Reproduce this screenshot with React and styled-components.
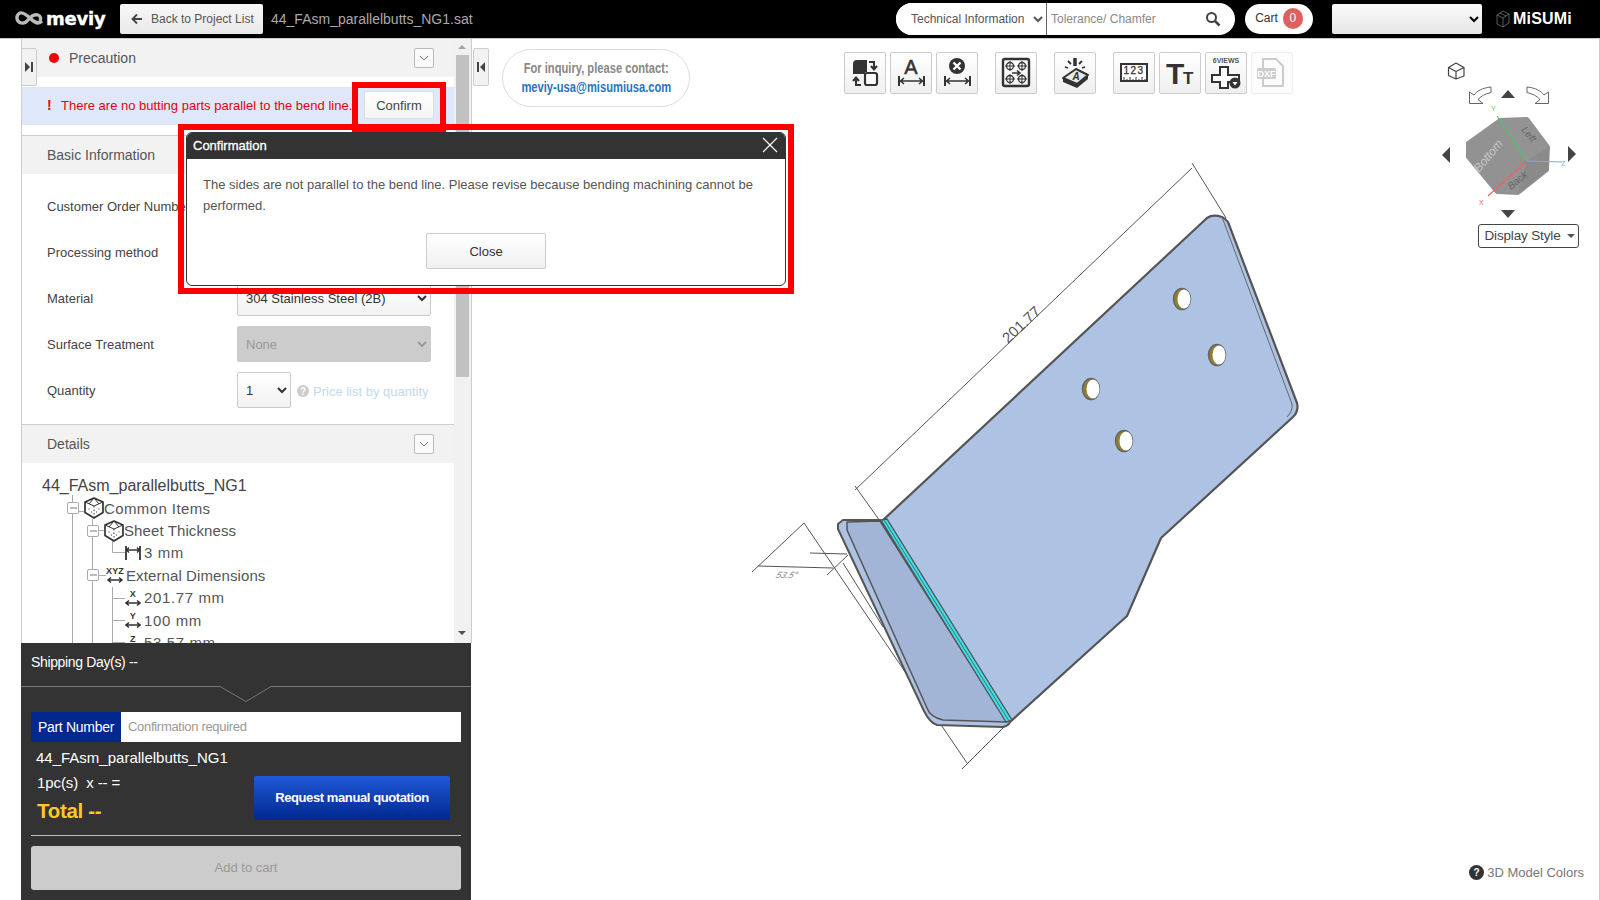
import React from 'react';
import styled, { createGlobalStyle } from 'styled-components';

const GlobalStyle = createGlobalStyle`
  html, body {
    margin: 0;
    padding: 0;
    background: #fff;
    overflow: hidden;
  }
  body {
    font-family: 'Liberation Sans', Arial, sans-serif;
    color: #555;
  }
  * { box-sizing: border-box; }
`;

const Page = styled.div`
  width: 1600px;
  height: 900px;
  display: flex;
  flex-direction: column;
  position: relative;
  overflow: hidden;
`;

/* header */
const Header = styled.header`
  height: 39px;
  flex: none;
  background: #000;
  border-bottom: 1px solid #ccc;
  display: flex;
  align-items: center;
  padding: 0 28px 1px 15px;
`;
const Logo = styled.div`
  display: flex;
  align-items: center;
  gap: 2px;
  width: 105px;
  margin-top: -1px;
`;
const LogoWord = styled.span`
  font-family: 'DejaVu Sans', sans-serif;
  font-weight: 700;
  font-size: 18px;
  color: #fff;
  letter-spacing: -0.2px;
  -webkit-text-stroke: 0.4px #fff;
`;
const BackButton = styled.button`
  width: 143px;
  height: 30px;
  border: 0;
  border-radius: 2px;
  background: linear-gradient(#f7f7f7, #e9e9e9);
  color: #555;
  font: 12px 'Liberation Sans', sans-serif;
  display: flex;
  align-items: center;
  gap: 8px;
  padding: 0 0 0 11px;
`;
const FileName = styled.span`
  margin-left: 8px;
  color: #aaa;
  font-size: 14px;
`;
const HeaderRight = styled.div`
  margin-left: auto;
  display: flex;
  align-items: center;
`;
const SearchPill = styled.div`
  width: 339px;
  height: 32px;
  border-radius: 16px;
  background: #fff;
  display: flex;
  align-items: center;
  overflow: hidden;
  padding-right: 14px;
`;
const SearchSelect = styled.select`
  width: 151px;
  height: 32px;
  border: 0;
  border-right: 1px solid #666;
  background: #fff;
  color: #555;
  font: 12px 'Liberation Sans', sans-serif;
  padding-left: 11px;
  outline: none;
`;
const SearchHint = styled.span`
  flex: 1;
  padding-left: 4px;
  font-size: 12px;
  color: #888;
`;
const CartPill = styled.div`
  width: 68px;
  height: 30px;
  margin-left: 10px;
  padding-bottom: 1px;
  border-radius: 15px;
  background: #fff;
  display: flex;
  align-items: center;
  justify-content: center;
  gap: 5px;
  font-size: 12px;
  color: #333;
`;
const CartCount = styled.span`
  width: 20px;
  height: 21px;
  border-radius: 10px;
  background: #e06060;
  color: #fff;
  display: flex;
  align-items: center;
  justify-content: center;
  font-size: 12px;
`;
const LangSelect = styled.select`
  width: 150px;
  height: 30px;
  margin-left: 19px;
  border: 0;
  border-radius: 2px;
  background: linear-gradient(#fafafa, #e6e6e6);
`;
const Misumi = styled.div`
  margin-left: 14px;
  display: flex;
  align-items: center;
  gap: 3px;
  color: #fff;
  font-weight: 700;
  font-size: 16px;
  letter-spacing: 0.2px;
`;

/* left side */
const Body = styled.div`
  flex: 1;
  min-height: 0;
  display: flex;
  padding-left: 21px;
`;
const Sidebar = styled.aside`
  width: 450px;
  flex: none;
  display: flex;
  flex-direction: column;
  position: relative;
`;
const ScrollArea = styled.div`
  flex: 1;
  min-height: 0;
  margin-right: -1px;
  display: flex;
  border-left: 1px solid #ccc;
  border-right: 1px solid #ccc;
  overflow: hidden;
`;
const ScrollContent = styled.div`
  width: 432px;
  flex: none;
  position: relative;
`;
const Scrollbar = styled.div`
  width: 17px;
  flex: none;
  background: #f1f1f1;
  display: flex;
  flex-direction: column;
  align-items: center;
`;
const ScrollThumb = styled.div`
  width: 13px;
  height: 322px;
  margin-top: 16px;
  background: #c1c1c1;
`;
const ScrollArrow = styled.span`
  width: 0;
  height: 0;
  position: absolute;
  right: -12px;
  border-left: 4px solid transparent;
  border-right: 4px solid transparent;
  ${(p) => (p.$down
    ? 'border-top: 4px solid #505050; top: 592px;'
    : 'border-bottom: 4px solid #a3a3a3; top: 6px;')}
`;
const SideTab = styled.div`
  position: absolute;
  top: 9px;
  ${(p) => (p.$right ? 'left: 452px;' : 'left: 0;')}
  width: 16px;
  height: 38px;
  background: #f2f2f2;
  border: 1px solid #ccc;
  border-radius: 2px;
  display: flex;
  align-items: center;
  justify-content: center;
  z-index: 2;
`;
const SectionHead = styled.div`
  height: 38px;
  background: #f2f2f2;
  display: flex;
  align-items: center;
  justify-content: space-between;
  padding: 0 20px 0 ${(p) => p.$pad || 25}px;
  font-size: 14px;
  color: #555;
`;
const HeadLabel = styled.span`
  display: flex;
  align-items: center;
  gap: 10px;
`;
const RedDot = styled.span`
  width: 10px;
  height: 10px;
  border-radius: 50%;
  background: #ee0000;
`;
const ChevronBox = styled.span`
  width: 20px;
  height: 20px;
  border: 1px solid #bbb;
  border-radius: 2px;
  background: #fafafa;
  display: flex;
  align-items: center;
  justify-content: center;
`;
const WarnRow = styled.div`
  height: 38px;
  margin-top: 10px;
  background: #dfe8fb;
  display: flex;
  align-items: center;
  padding: 0 20px 2px 25px;
  color: #e60012;
  font-size: 13px;
`;
const WarnMark = styled.b`
  width: 14px;
  font-size: 14px;
`;
const ConfirmButton = styled.button`
  margin-left: auto;
  width: 70px;
  height: 28px;
  border: 1px solid #ddd;
  border-radius: 2px;
  background: linear-gradient(#fff, #f4f4f4);
  color: #444;
  font: 13px 'Liberation Sans', sans-serif;
`;
const Divider = styled.div`
  margin-top: ${(p) => p.$gap ?? 10}px;
  height: 1px;
  background: #ccc;
`;
const Form = styled.div`
  padding: 9px 0 11px 25px;
`;
const FormRow = styled.div`
  height: 46px;
  display: flex;
  align-items: center;
  font-size: 13px;
  color: #444;
`;
const FormLabel = styled.span`
  width: 190px;
  flex: none;
`;
const Field = styled.select`
  width: ${(p) => p.$width || 194}px;
  height: 36px;
  border: 1px solid #ccc;
  border-radius: 2px;
  background: ${(p) => (p.disabled ? '#ccc' : 'linear-gradient(#fff, #f2f2f2)')};
  color: ${(p) => (p.disabled ? '#999' : '#333')};
  opacity: 1;
  font: 13px 'Liberation Sans', sans-serif;
  padding-left: 4px;
`;
const PriceLink = styled.span`
  margin: 2px 0 0 6px;
  display: flex;
  align-items: center;
  gap: 4px;
  font-size: 13px;
  color: #c3d9f0;
`;
const HelpDot = styled.span`
  width: ${(p) => p.$size || 12}px;
  height: ${(p) => p.$size || 12}px;
  border-radius: 50%;
  background: ${(p) => p.$bg || '#ccc'};
  color: #fff;
  font-size: 10px;
  font-weight: 700;
  display: flex;
  align-items: center;
  justify-content: center;
`;

/* tree */
const Tree = styled.div`
  position: relative;
  padding-top: 12px;
`;
const TreeTitle = styled.div`
  height: 22px;
  line-height: 22px;
  padding-left: 20px;
  font-size: 16px;
  color: #444;
`;
const TreeRow = styled.div`
  height: 22.4px;
  display: flex;
  align-items: center;
  padding-left: ${(p) => p.$indent}px;
  font-size: 15px;
  letter-spacing: ${(p) => p.$track}px;
  color: #555;
  position: relative;
  white-space: nowrap;
`;
const Expander = styled.span`
  width: 12px;
  height: 12px;
  margin-right: ${(p) => p.$after || 5}px;
  border: 1px solid #aaa;
  border-radius: 2px;
  background: #fff;
  display: flex;
  align-items: center;
  justify-content: center;
  &::before {
    content: '';
    width: 7px;
    height: 2px;
    background: #bbb;
  }
`;
const Guides = styled.svg`
  position: absolute;
  left: 0;
  top: 0;
`;

/* bottom panel */
const Quote = styled.section`
  height: 257px;
  flex: none;
  background: #333;
  color: #fff;
  position: relative;
  padding: 0 10px;
`;
const Shipping = styled.div`
  height: 43px;
  padding-top: 11px;
  font-size: 14px;
  letter-spacing: -0.35px;
`;
const Notch = styled.svg`
  display: block;
  margin-left: -10px;
`;
const PartRow = styled.div`
  margin-top: 8px;
  height: 30px;
  display: flex;
  background: #fff;
`;
const PartTag = styled.div`
  width: 90px;
  background: #00288f;
  color: #fff;
  font-size: 14px;
  letter-spacing: -0.3px;
  display: flex;
  align-items: center;
  justify-content: center;
`;
const PartHint = styled.div`
  padding: 0 0 2px 7px;
  color: #999;
  font-size: 13px;
  letter-spacing: -0.3px;
  display: flex;
  align-items: center;
`;
const PartName = styled.div`
  margin: 6px 0 0 5px;
  font-size: 15px;
  line-height: 20px;
`;
const PriceRow = styled.div`
  display: flex;
  justify-content: space-between;
  padding: 0 11px 0 6px;
  height: 51px;
`;
const PriceCol = styled.div`
  padding-top: 4px;
`;
const Qty = styled.div`
  font-size: 15px;
  line-height: 22px;
  letter-spacing: -0.1px;
  white-space: pre;
`;
const Total = styled.div`
  margin-top: 4px;
  color: #ffc91f;
  font-size: 20.5px;
  font-weight: 700;
  letter-spacing: -0.3px;
  line-height: 26px;
`;
const QuoteButton = styled.button`
  width: 196px;
  height: 44px;
  margin-top: 8px;
  padding-bottom: 2px;
  border: 0;
  border-radius: 2px;
  background: linear-gradient(#1f58d6, #00288f);
  color: #fff;
  font: 700 13px 'Liberation Sans', sans-serif;
  letter-spacing: -0.4px;
`;
const QuoteLine = styled.div`
  height: 1px;
  background: #bbb;
  margin-top: 16px;
`;
const CartButton = styled.button`
  display: block;
  width: 100%;
  height: 44px;
  margin-top: 10px;
  padding-bottom: 2px;
  border: 0;
  border-radius: 3px;
  background: #ccc;
  color: #999;
  font: 13px 'Liberation Sans', sans-serif;
`;

/* viewer */
const Viewer = styled.main`
  flex: 1;
  position: relative;
  border-right: 1px solid #ccc;
`;
const Drawing = styled.svg`
  position: absolute;
  left: 0;
  top: 0;
`;
const ViewerTop = styled.div`
  position: relative;
  display: flex;
  align-items: flex-start;
  padding: 10px 0 0 31px;
`;
const Inquiry = styled.div`
  width: 188px;
  height: 58px;
  border: 1px solid #ddd;
  border-radius: 29px;
  display: flex;
  flex-direction: column;
  align-items: center;
  justify-content: center;
  font-weight: 700;
  font-size: 14.5px;
  line-height: 19px;
  white-space: nowrap;
`;
const InquiryLine = styled.span`
  display: block;
  transform: scaleX(0.77);
  color: ${(p) => p.$color};
`;
const Toolbar = styled.div`
  margin: 3px 0 0 154px;
  display: flex;
`;
const ToolGroup = styled.div`
  display: flex;
  gap: 4px;
  margin-right: 17px;
`;
const ToolButton = styled.div`
  width: 42px;
  height: 42px;
  border: 1px solid ${(p) => (p.$off ? '#eee' : '#ccc')};
  border-radius: 2px;
  background: ${(p) => (p.$off ? '#fcfcfc' : 'linear-gradient(#fff, #efefef)')};
  display: flex;
`;
const DisplayStyle = styled.div`
  position: absolute;
  left: 1007px;
  top: 185px;
  width: 101px;
  height: 24px;
  padding: 0 0 1px 2px;
  border: 1px solid #444;
  border-radius: 3px;
  background: #fff;
  display: flex;
  align-items: center;
  justify-content: center;
  gap: 6px;
  font-size: 13.5px;
  letter-spacing: -0.15px;
  color: #444;
`;
const Caret = styled.span`
  border-left: 4px solid transparent;
  border-right: 4px solid transparent;
  border-top: 4px solid #555;
`;
const ColorsLink = styled.div`
  position: absolute;
  right: 15px;
  bottom: 20px;
  display: flex;
  align-items: center;
  gap: 3px;
  font-size: 13px;
  color: #777;
`;

/* overlays */
const RedFrame = styled.div`
  position: absolute;
  left: ${(p) => p.$x}px;
  top: ${(p) => p.$y}px;
  width: ${(p) => p.$w}px;
  height: ${(p) => p.$h}px;
  border: 6px solid #f00;
  z-index: ${(p) => p.$z};
`;
const Modal = styled.div`
  position: absolute;
  left: 186px;
  top: 132px;
  width: 600px;
  height: 154px;
  z-index: 6;
  background: #fff;
  border: 1px solid #333;
  border-radius: 6px;
  overflow: hidden;
`;
const ModalHead = styled.div`
  height: 26px;
  padding: 0 7px 2px 6px;
  background: #333;
  color: #fff;
  font-size: 13px;
  -webkit-text-stroke: 0.3px #fff;
  display: flex;
  align-items: center;
  justify-content: space-between;
`;
const ModalText = styled.p`
  margin: 15px 16px 0;
  font-size: 13px;
  line-height: 21px;
  color: #555;
`;
const CloseButton = styled.button`
  display: block;
  width: 120px;
  height: 36px;
  margin: 17px auto 0;
  border: 1px solid #ccc;
  border-radius: 2px;
  background: linear-gradient(#fff, #f0f0f0);
  color: #333;
  font: 13px 'Liberation Sans', sans-serif;
`;

const DARK = '#333';

function Dim({ y = 28, x1 = 8, x2 = 33 }) {
  return (
    <g stroke={DARK} strokeWidth="2" fill="none">
      <path d={`M${x1} ${y - 5}V${y + 5}M${x2} ${y - 5}V${y + 5}`} />
      <path strokeWidth="1.5" d={`M${x1 + 1} ${y}H${x2 - 1}M${x1 + 5} ${y - 3}L${x1 + 1.5} ${y}L${x1 + 5} ${y + 3}M${x2 - 5} ${y - 3}L${x2 - 1.5} ${y}L${x2 - 5} ${y + 3}`} />
    </g>
  );
}

function Tool({ children }) {
  return <svg width="40" height="40" viewBox="0 0 40 40">{children}</svg>;
}

const SwapIcon = () => (
  <Tool>
    <path d="M12 7H22V19H20V21H8V11Q8 7 12 7Z" fill={DARK} />
    <rect x="20" y="20" width="12" height="12" rx="2" fill="#fff" stroke={DARK} strokeWidth="2.2" />
    <path d="M24 9h5v7M26 13l3 3.5 3-3.5M16 32h-5v-7M8 28l3-3.500 3 3.5" fill="none" stroke={DARK} strokeWidth="2" />
  </Tool>
);
const DimAIcon = () => (
  <Tool>
    <text x="20" y="21" textAnchor="middle" fontSize="20" stroke={DARK} strokeWidth="0.5" fill={DARK} fontFamily="Liberation Sans">A</text>
    <Dim />
  </Tool>
);
const DimXIcon = () => (
  <Tool>
    <circle cx="20" cy="13" r="8" fill={DARK} />
    <path d="M16.5 9.5l7 7M23.5 9.5l-7 7" stroke="#fff" strokeWidth="2.4" />
    <Dim />
  </Tool>
);
const HolesIcon = () => (
  <Tool>
    <rect x="7" y="6" width="26" height="27" rx="2" fill="none" stroke={DARK} strokeWidth="2.4" />
    {[[14, 13], [26, 13], [14, 26], [26, 26]].map(([cx, cy]) => (
      <g key={`${cx}-${cy}`} fill="none" stroke={DARK} strokeWidth="1.3">
        <circle cx={cx} cy={cy} r="3.5" />
        <path d={`M${cx - 5} ${cy}H${cx + 5}M${cx} ${cy - 5}V${cy + 5}`} strokeWidth="1" />
      </g>
    ))}
    <path d="M16 20h7M21 17.5l3 2.5-3 2.5" fill="none" stroke={DARK} strokeWidth="1.6" />
  </Tool>
);
const StampIcon = () => (
  <Tool>
    <path d="M8 25l13-9 12 6-11 9z" fill="#e8e8e8" stroke={DARK} strokeWidth="2" strokeLinejoin="round" />
    <path d="M8 25v4l14 6 11-9v-4l-11 9z" fill={DARK} />
    <text x="21" y="27" textAnchor="middle" fontSize="10" fontStyle="italic" fontWeight="700" fill={DARK} fontFamily="Liberation Sans">A</text>
    <path d="M20 5v8" stroke={DARK} strokeWidth="3.5" />
    <path d="M13 8l3 3M27 8l-3 3M10 14l3 1M30 14l-3 1" stroke={DARK} strokeWidth="1.8" fill="none" />
  </Tool>
);
const RulerIcon = () => (
  <Tool>
    <rect x="7" y="11" width="26" height="17" fill="#fff" stroke={DARK} strokeWidth="2" />
    <text x="20" y="21" textAnchor="middle" fontSize="10" letterSpacing="1.5" stroke={DARK} strokeWidth="0.3" fill={DARK} fontFamily="Liberation Sans">123</text>
    <path d="M10 28v-4M13 28v-2M16 28v-4M19 28v-2M22 28v-4M25 28v-2M28 28v-4M31 28v-2" stroke={DARK} strokeWidth="1" />
  </Tool>
);
const FontSizeIcon = () => (
  <Tool>
    <text x="6" y="31" fontSize="30" fontWeight="700" fill={DARK} fontFamily="Liberation Sans">T</text>
    <text x="23" y="31" fontSize="17" fontWeight="700" fill={DARK} fontFamily="Liberation Sans">T</text>
  </Tool>
);
const ViewsIcon = () => (
  <Tool>
    <text x="20" y="10" textAnchor="middle" fontSize="7" fontWeight="700" fill="#555" fontFamily="Liberation Sans">6VIEWS</text>
    <path d="M14 14h8v8h11v7H22v6h-8v-6H6v-7h8z" fill="#fff" stroke={DARK} strokeWidth="2" />
    <path d="M14 22h8v7h-8z" fill="none" stroke={DARK} strokeWidth="0" />
    <circle cx="29" cy="30" r="5.5" fill={DARK} />
    <path d="M26.5 29h5L29 32.5z" fill="#fff" />
  </Tool>
);
const DxfIcon = () => (
  <Tool>
    <path d="M11 6h13l7 7v20H11z" fill="none" stroke="#ccc" strokeWidth="2" />
    <rect x="5" y="15" width="19" height="11" rx="1.5" fill="#ccc" />
    <text x="14.5" y="24" textAnchor="middle" fontSize="9" fontWeight="700" fill="#fff" fontFamily="Liberation Sans">DXF</text>
  </Tool>
);

function CubeIcon() {
  return (
    <svg width="20" height="22" viewBox="0 0 20 22">
      <path d="M10 1L19 5V15.5L10 21L1 15.5V5Z" fill="#fff" stroke="#333" strokeWidth="1.7" strokeLinejoin="round" />
      <path d="M1 5L10 9L19 5M10 1L5 7M10 1L15 7" fill="none" stroke="#333" strokeWidth="1" />
      <path d="M10 9V20" stroke="#333" strokeWidth="1" strokeDasharray="1.5 2" />
      <path d="M4.5 12h1M14.5 12h1M7 15h1M12 15h1" stroke="#333" strokeWidth="1" />
    </svg>
  );
}
function ThicknessIcon() {
  return (
    <svg width="16" height="16" viewBox="0 0 16 16" style={{ marginRight: 3 }}>
      <path d="M1 1v14M15 1v14" fill="none" stroke="#333" strokeWidth="1.8" />
      <path d="M1 5h14M4 2.5L1.5 5 4 7.5M12 2.5L14.5 5 12 7.5" fill="none" stroke="#333" strokeWidth="1.4" />
    </svg>
  );
}
function AxisIcon({ label, wide }) {
  return (
    <svg width={wide ? 18 : 16} height="18" viewBox={wide ? '0 0 18 18' : '0 0 16 18'} style={{ marginRight: wide ? 2 : 3 }}>
      <text x={wide ? 9 : 8} y="8" textAnchor="middle" fontSize={9} fontWeight="700" fill="#333" fontFamily="Liberation Sans">{label}</text>
      <path d={wide ? 'M2 14h14M5 11.5L2 14l3 2.5M13 11.5L16 14l-3 2.5' : 'M1 14h14M4 11.5L1 14l3 2.5M12 11.5L15 14l-3 2.5'} fill="none" stroke="#333" strokeWidth="1.5" />
    </svg>
  );
}

const HOLES = [[1182, 299], [1217, 355], [1091, 389], [1124, 441]];

function Part() {
  return (
    <g>
      {/* dimension lines */}
      <g stroke="#555" strokeWidth="1" fill="none">
        <path d="M855 490L1192 168M1192 163L1226 218M855 486L880 521" />
        <path d="M804 523L752 572M804 523L967 763M962 769L1008 723" />
        <path d="M758 566L833 568M810 553L847 554M827 575L848 555M843 563L883 627" />
      </g>
      <text fontSize="15" fill="#555" fontFamily="Liberation Sans" transform="translate(1008 344) rotate(-43)">201.77</text>
      <text fontSize="9" fontStyle="italic" fill="#888" fontFamily="Liberation Sans" transform="translate(775 578) skewX(-25)">53.5°</text>

      {/* flange lip */}
      <path d="M843 520L838 524V529L924 711Q930 723 937 725L1003 727Q1008 726 1010 722L880 520Z" fill="#aec3e4" stroke="#555" strokeWidth="2" strokeLinejoin="round" />
      {/* flange */}
      <path d="M847 522L880 521L1007 722L943 720Q930 717 927 708L847 530Z" fill="#a2b5d6" stroke="#555" strokeWidth="1.5" strokeLinejoin="round" />
      {/* plate */}
      <path d="M882 521L1207 218Q1213 214 1222 217Q1226 219 1228 222L1297 403Q1299 411 1293 417L1161 538L1127 616L1010 722Z" fill="#aec3e4" stroke="#555" strokeWidth="2.2" strokeLinejoin="round" />
      <path d="M1222 217L1292 404Q1293 411 1287 417" fill="none" stroke="#666" strokeWidth="1" />
      {/* bend */}
      <path d="M881 520L887 519L1012 720L1006 722Z" fill="#37e0e8" stroke="#555" strokeWidth="1.3" />
      <path d="M884 520L1009 721" stroke="#667" strokeWidth="1" />
      {HOLES.map(([cx, cy]) => (
        <g key={cx}>
          <ellipse cx={cx} cy={cy} rx="8.5" ry="10.5" fill="#8f7f2f" stroke="#666" strokeWidth="1.5" />
          <ellipse cx={cx + 2} cy={cy} rx="6.5" ry="9.5" fill="#fff" />
        </g>
      ))}
    </g>
  );
}

function ViewCube() {
  const arrow = 'M1491 87C1482 88 1477 91 1474 95L1469.5 92V103.5H1483L1478 99.5C1481 96 1485 94 1491 92.5Z';
  return (
    <g>
      <g fill="none" stroke="#444" strokeWidth="1.2" strokeLinejoin="round">
        <path d="M1456 63L1464 67.5V76L1456 79L1448.5 75.5V67.5ZM1448.5 67.5L1456 71.5L1464 67.5M1456 71.5V79" />
      </g>
      <path d={arrow} fill="#fff" stroke="#666" />
      <path d={arrow} fill="#fff" stroke="#666" transform="translate(3018 0) scale(-1 1)" />
      <g fill="#444">
        <path d="M1508 90L1515 98H1501Z" />
        <path d="M1508 218L1515 210H1501Z" />
        <path d="M1442 155L1450 147V163Z" />
        <path d="M1576 154L1568 146V162Z" />
      </g>
      <path d="M1468 143L1500 120L1527 119L1548 147L1547 170L1518 193L1497 192L1468 157Z" fill="#929292" stroke="#929292" strokeWidth="4" strokeLinejoin="round" />
      <path d="M1527 161L1549 147L1548 170L1518 194Z" fill="#8a8a8a" />
      <path d="M1500 119L1527 118L1549 147L1527 161Z" fill="#939393" />
      <text fontSize="12" fontStyle="italic" fill="#c8c8c8" fontFamily="Liberation Sans" transform="translate(1479 173) rotate(-50)">Bottom</text>
      <text fontSize="10" fontStyle="italic" fill="#666" fontFamily="Liberation Sans" transform="translate(1521 130) rotate(50)">Left</text>
      <text fontSize="10" fontStyle="italic" fill="#666" fontFamily="Liberation Sans" transform="translate(1511 190) rotate(-40)">Back</text>
      <path d="M1527 161L1497 116" stroke="#48c868" strokeWidth="1.2" />
      <path d="M1527 161L1488 196" stroke="#f06060" strokeWidth="1.2" />
      <path d="M1527 161L1562 162" stroke="#70b0f0" strokeWidth="1.2" />
      <text x="1491" y="111" fontSize="7" fill="#48c868" fontFamily="Liberation Sans">Y</text>
      <text x="1479" y="205" fontSize="7" fill="#f06060" fontFamily="Liberation Sans">X</text>
      <text x="1561" y="166" fontSize="7" fill="#70b0f0" fontFamily="Liberation Sans">Z</text>
    </g>
  );
}

const TOOL_GROUPS = [
  [SwapIcon, DimAIcon, DimXIcon],
  [HolesIcon],
  [StampIcon],
  [RulerIcon, FontSizeIcon, ViewsIcon, DxfIcon],
];

export default function App() {
  return (
    <Page>
      <GlobalStyle />
      <Header>
        <Logo>
          <svg width="29" height="16" viewBox="0 0 29 16">
            <path d="M27 11C24 14 20 13 16 9S8 2 5 3 1 8 3 11s7 3 10-1 7-6 10-5 3 4 2 6" fill="none" stroke="#bbb" strokeWidth="3.4" />
          </svg>
          <LogoWord>meviy</LogoWord>
        </Logo>
        <BackButton>
          <svg width="12" height="12" viewBox="0 0 12 12">
            <path d="M11 6H2M6 1.5L1.5 6 6 10.5" fill="none" stroke="#444" strokeWidth="1.8" />
          </svg>
          Back to Project List
        </BackButton>
        <FileName>44_FAsm_parallelbutts_NG1.sat</FileName>
        <HeaderRight>
          <SearchPill>
            <SearchSelect defaultValue="t">
              <option value="t">Technical Information</option>
            </SearchSelect>
            <SearchHint>Tolerance/ Chamfer</SearchHint>
            <svg width="16" height="16" viewBox="0 0 16 16">
              <circle cx="6.5" cy="6.5" r="4.5" fill="none" stroke="#444" strokeWidth="2" />
              <path d="M10 10l4.5 4.5" stroke="#444" strokeWidth="2.5" />
            </svg>
          </SearchPill>
          <CartPill>Cart <CartCount>0</CartCount></CartPill>
          <LangSelect />
          <Misumi>
            <svg width="14" height="18" viewBox="0 0 14 18">
              <path d="M1 5l6-4 6 3v9l-6 4-6-3zM1 5l6 3 6-4M7 8v9M4 3l6 3" fill="none" stroke="#999" strokeWidth="0.6" />
            </svg>
            MiSUMi
          </Misumi>
        </HeaderRight>
      </Header>

      <Body>
        <Sidebar>
          <SideTab>
            <svg width="8" height="10" viewBox="0 0 8 10"><path d="M0 0l5 5-5 5zM6 0h2v10H6z" fill="#444" /></svg>
          </SideTab>
          <SideTab $right>
            <svg width="8" height="10" viewBox="0 0 8 10"><path d="M8 0L3 5l5 5zM0 0h2v10H0z" fill="#444" /></svg>
          </SideTab>
          <ScrollArea>
            <ScrollContent>
              <ScrollArrow />
              <ScrollArrow $down />
              <SectionHead $pad={27}>
                <HeadLabel><RedDot />Precaution</HeadLabel>
                <ChevronBox>
                  <svg width="10" height="6" viewBox="0 0 10 6"><path d="M1 1l4 4 4-4" fill="none" stroke="#777" /></svg>
                </ChevronBox>
              </SectionHead>
              <WarnRow>
                <WarnMark>!</WarnMark>
                There are no butting parts parallel to the bend line.
                <ConfirmButton>Confirm</ConfirmButton>
              </WarnRow>
              <Divider />
              <SectionHead>Basic Information</SectionHead>
              <Form>
                <FormRow><FormLabel>Customer Order Number</FormLabel></FormRow>
                <FormRow><FormLabel>Processing method</FormLabel></FormRow>
                <FormRow>
                  <FormLabel>Material</FormLabel>
                  <Field defaultValue="a"><option value="a">304 Stainless Steel (2B)</option></Field>
                </FormRow>
                <FormRow>
                  <FormLabel>Surface Treatment</FormLabel>
                  <Field disabled defaultValue="a"><option value="a">None</option></Field>
                </FormRow>
                <FormRow>
                  <FormLabel>Quantity</FormLabel>
                  <Field $width={54} defaultValue="1"><option value="1">1</option></Field>
                  <PriceLink><HelpDot>?</HelpDot>Price list by quantity</PriceLink>
                </FormRow>
              </Form>
              <Divider $gap={0} />
              <SectionHead>
                Details
                <ChevronBox>
                  <svg width="10" height="6" viewBox="0 0 10 6"><path d="M1 1l4 4 4-4" fill="none" stroke="#777" /></svg>
                </ChevronBox>
              </SectionHead>
              <Tree>
                <Guides width="432" height="200" viewBox="22 464 432 200">
                  <path d="M72.5 496V660M92.5 520V660M112.5 540V553.5H125M112.5 588V660M112.5 599.5H125M112.5 621.5H125M112.5 643.5H125M79 512.5H84M99 531.5H104M99 576.5H106" fill="none" stroke="#aaa" />
                </Guides>
                <TreeTitle>44_FAsm_parallelbutts_NG1</TreeTitle>
                <TreeRow $indent={45} $track={0.4}><Expander /><CubeIcon />Common Items</TreeRow>
                <TreeRow $indent={65} $track={0.1}><Expander /><CubeIcon />Sheet Thickness</TreeRow>
                <TreeRow $indent={103} $track={0.62}><ThicknessIcon />3 mm</TreeRow>
                <TreeRow $indent={65} $track={0.1}><Expander $after={7} /><AxisIcon label="XYZ" wide />External Dimensions</TreeRow>
                <TreeRow $indent={103} $track={0.62}><AxisIcon label="X" />201.77 mm</TreeRow>
                <TreeRow $indent={103} $track={0.62}><AxisIcon label="Y" />100 mm</TreeRow>
                <TreeRow $indent={103} $track={0.62}><AxisIcon label="Z" />53.57 mm</TreeRow>
              </Tree>
            </ScrollContent>
            <Scrollbar><ScrollThumb /></Scrollbar>
          </ScrollArea>

          <Quote>
            <Shipping>Shipping Day(s) --</Shipping>
            <Notch width="450" height="18" viewBox="0 0 450 18">
              <path d="M0 .5H199L225 15.5 250 .5H450" fill="none" stroke="#777" />
            </Notch>
            <PartRow>
              <PartTag>Part Number</PartTag>
              <PartHint>Confirmation required</PartHint>
            </PartRow>
            <PartName>44_FAsm_parallelbutts_NG1</PartName>
            <PriceRow>
              <PriceCol>
                <Qty>{'1pc(s)  x -- ='}</Qty>
                <Total>Total --</Total>
              </PriceCol>
              <QuoteButton>Request manual quotation</QuoteButton>
            </PriceRow>
            <QuoteLine />
            <CartButton>Add to cart</CartButton>
          </Quote>
        </Sidebar>

        <Viewer>
          <Drawing width="1129" height="861" viewBox="471 39 1129 861">
            <Part />
            <ViewCube />
          </Drawing>
          <ViewerTop>
            <Inquiry>
              <InquiryLine $color="#888">For inquiry, please contact:</InquiryLine>
              <InquiryLine $color="#2a74bd">meviy-usa@misumiusa.com</InquiryLine>
            </Inquiry>
            <Toolbar>
              {TOOL_GROUPS.map((group, i) => (
                <ToolGroup key={i}>
                  {group.map((Icon, j) => (
                    <ToolButton key={j} $off={Icon === DxfIcon}><Icon /></ToolButton>
                  ))}
                </ToolGroup>
              ))}
            </Toolbar>
          </ViewerTop>
          <DisplayStyle>Display Style <Caret /></DisplayStyle>
          <ColorsLink><HelpDot $bg="#333" $size={15}>?</HelpDot>3D Model Colors</ColorsLink>
        </Viewer>
      </Body>

      <RedFrame $x={352} $y={82} $w={94} $h={50} $z={4} />
      <RedFrame $x={178} $y={124} $w={616} $h={170} $z={5} />
      <Modal>
        <ModalHead>
          Confirmation
          <svg width="16" height="16" viewBox="0 0 16 16"><path d="M1 1l14 14M15 1L1 15" stroke="#fff" strokeWidth="1.2" /></svg>
        </ModalHead>
        <ModalText>The sides are not parallel to the bend line. Please revise because bending machining cannot be performed.</ModalText>
        <CloseButton>Close</CloseButton>
      </Modal>
    </Page>
  );
}
